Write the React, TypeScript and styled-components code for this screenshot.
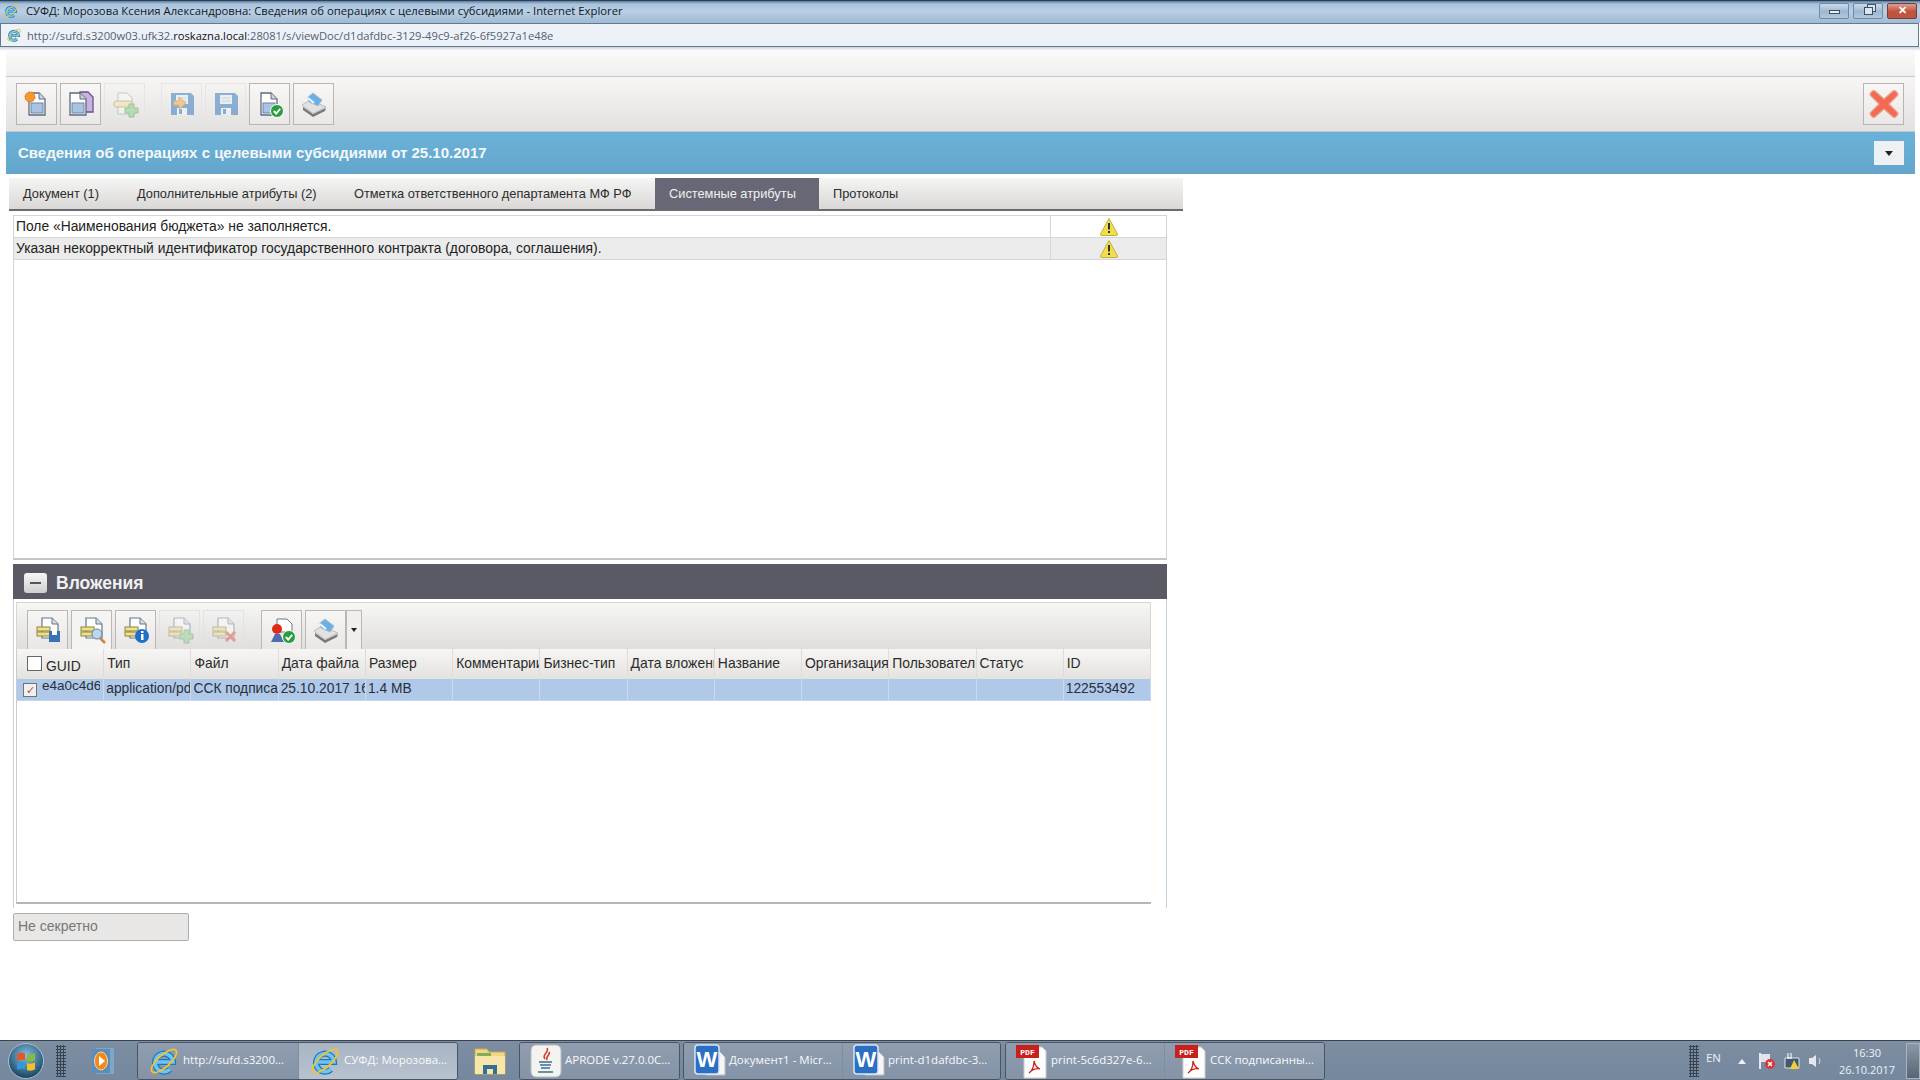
import React, { FC, ReactNode } from 'react';
import styled, { createGlobalStyle } from 'styled-components';

const GlobalStyle = createGlobalStyle`
	html, body {
		margin: 0;
		padding: 0;
		background: #fff;
	}
	* {
		box-sizing: border-box;
	}
`;

const tabs = [
	{ label: 'Документ (1)', width: 114 },
	{ label: 'Дополнительные атрибуты (2)', width: 217 },
	{ label: 'Отметка ответственного департамента МФ РФ', width: 301 },
	{ label: 'Системные атрибуты', width: 164, active: true },
	{ label: 'Протоколы', width: 120 },
];

const columns = ['Тип', 'Файл', 'Дата файла', 'Размер', 'Комментарии', 'Бизнес-тип', 'Дата вложения', 'Название', 'Организация', 'Пользователь', 'Статус', 'ID'];
const rowCells = ['application/pdf', 'ССК подписанный', '25.10.2017 16:30', '1.4 MB', '', '', '', '', '', '', '', '122553492'];

/* ---------- icons ---------- */

const Svg: FC<{ size?: number; children: ReactNode }> = ({ size = 28, children }) => (
	<svg width={size} height={size} viewBox="0 0 28 28" fill="none">
		{children}
	</svg>
);

const OkBadge = () => (
	<>
		<circle cx="21" cy="21" r="6.5" fill="#2a9d3c" stroke="#fff" strokeWidth="1" />
		<path d="M17.8 21l2.4 2.5 4-4.6" stroke="#fff" strokeWidth="1.9" />
	</>
);

const PlusBadge = () => <path d="M18 14h5v4h4v5h-4v4h-5v-4h-4v-5h4z" fill="#8fd08a" stroke="#5da55a" />;

const Page2 = ({ x = 5 }: { x?: number }) => (
	<>
		<path d={`M${x} 3h10l6 6v16H${x}z`} fill="#fff" stroke="#5d6b7c" strokeWidth="1.3" />
		<path d={`M${x + 10} 3v6h6`} fill="#cdd6e0" stroke="#5d6b7c" />
		<rect x={x + 2} y="13" width="12" height="10" fill="#a9c3e4" stroke="#6c84a2" />
	</>
);

const NewDocIcon = () => (
	<Svg>
		<Page2 x={6} />
		<circle cx="7" cy="7" r="5" fill="#f29a2e" stroke="#e26d1f" strokeDasharray="2 1" />
	</Svg>
);

const CopyDocIcon = () => (
	<Svg>
		<path d="M13 2h8l5 5v15H13z" fill="#c7b4de" stroke="#6a4f93" strokeWidth="1.3" />
		<Page2 x={3} />
	</Svg>
);

const AddDocIcon = () => (
	<Svg>
		<g opacity="0.55">
			<path d="M7 3h9l5 5v16H7z" fill="#fafafa" stroke="#9aa" />
			<rect x="3" y="11" width="18" height="6" rx="2" fill="#f2e3a8" stroke="#b5a45c" />
			<PlusBadge />
		</g>
	</Svg>
);

const FloppyIcon: FC<{ arrow?: boolean }> = ({ arrow }) => (
	<Svg>
		<g opacity="0.62">
			<path d="M3 3h20l3 3v19H3z" fill="#4f8ac4" />
			<rect x="8" y="5" width="12" height="9" fill="#e8eef5" />
			<path d="M10 8h8M10 11h8" stroke="#b7c9dc" />
			<rect x="9" y="18" width="10" height="7" fill="#f0f4f8" />
			<rect x="11" y="19" width="3" height="5" fill="#4f8ac4" />
			{arrow && <path d="M6 11h5V7l7 6-7 6v-4H6z" fill="#f2b35a" stroke="#d58f36" />}
		</g>
	</Svg>
);

const CheckDocIcon = () => (
	<Svg>
		<Page2 x={5} />
		<OkBadge />
	</Svg>
);

const PrinterIcon = () => (
	<Svg>
		<path d="M3 17l10 7 13-6-1 3-12 6-10-7z" fill="#77787a" />
		<path d="M2 15l8-5 16 7-13 6.500z" fill="#e2e2e2" stroke="#bcbcbc" />
		<path d="M8 7l5-4 9 7-4 6-9-4z" fill="#6ab0e6" stroke="#a9bccb" />
		<path d="M8 8l6 5" stroke="#f3f6f9" strokeWidth="2" />
	</Svg>
);

const CloseBigIcon = () => (
	<svg width="30" height="30" viewBox="0 0 30 30">
		<path
			d="M6 2l9 8 9-8q2-1 3 .5l1.500 1.500q1 2-.5 3l-8 8 8 8q1.500 1 .5 3l-1.500 1.500q-1 1.500-3 .5l-9-8-9 8q-2 1-3-.5l-1.500-1.500q-1-2 .5-3l8-8-8-8q-1.500-1-.5-3l1.500-1.500q1-1.500 3-.5z"
			fill="#f26a50"
			stroke="#e9a294"
			strokeWidth="1.2"
		/>
	</svg>
);

const WarningIcon = () => (
	<svg width="20" height="20" viewBox="0 0 20 20">
		<path d="M10 1.5l8.5 15.5q.3 1.5-1.2 1.5H2.7q-1.5 0-1.2-1.5z" fill="#f1dd4d" stroke="#c3b13b" />
		<rect x="9" y="6" width="2" height="6.5" fill="#333" />
		<rect x="9" y="14" width="2" height="2" fill="#333" />
	</svg>
);

const SlipDoc: FC<{ faded?: boolean; children?: ReactNode }> = ({ faded, children }) => (
	<Svg>
		<g opacity={faded ? 0.45 : 1}>
			<path d="M8 2h10l6 6v14H8z" fill="#fff" stroke="#66778a" strokeWidth="1.2" />
			<path d="M18 2v6h6" fill="#d5dde6" stroke="#66778a" />
			<rect x="3" y="11" width="13" height="4" fill="#efe08a" stroke="#8c8644" />
			<rect x="3" y="16" width="13" height="4" fill="#efe08a" stroke="#8c8644" />
			{children}
		</g>
	</Svg>
);

const SignIcon = () => (
	<Svg>
		<path d="M9 3h10l5 5v8H9z" fill="#fff" stroke="#66778a" />
		<circle cx="9" cy="13" r="5" fill="#dd2a1b" />
		<path d="M3 26l4-8h5l4 8z" fill="#4c6db0" />
		<OkBadge />
	</Svg>
);

const IeIcon: FC<{ size?: number }> = ({ size = 16 }) => (
	<svg width={size} height={size} viewBox="0 0 32 32" fill="none">
		<path d="M8 17h17a9 9 0 1 0-3 7.4" stroke="#1f74bd" strokeWidth="6" />
		<path d="M8 17h17a9 9 0 1 0-3 7.4" stroke="#6cc4f2" strokeWidth="3.6" />
		<ellipse cx="16" cy="16" rx="16" ry="6" transform="rotate(-42 16 16)" stroke="#efc52f" strokeWidth="1.8" />
	</svg>
);

const StartOrb = () => (
	<svg width="36" height="36" viewBox="0 0 36 36">
		<defs>
			<radialGradient id="orbFill" cx="50%" cy="35%" r="65%">
				<stop offset="0%" stopColor="#8cc0dc" />
				<stop offset="70%" stopColor="#33688a" />
				<stop offset="100%" stopColor="#1d3f58" />
			</radialGradient>
		</defs>
		<circle cx="18" cy="18" r="17.500" fill="url(#orbFill)" stroke="#a7c3d5" />
		<path d="M9 11q3.500-2 8-.5v7q-4.500-1.500-8 .5z" fill="#e4572e" />
		<path d="M19 11q3.500 1.500 8-.5v7q-4.500 2-8 .5z" fill="#86bc3f" />
		<path d="M9 20q3.500-2 8-.5v7q-4.500-1.500-8 .5z" fill="#2f9ad6" />
		<path d="M19 20q3.500 1.500 8-.5v7q-4.500 2-8 .5z" fill="#f3c029" />
	</svg>
);

const MediaIcon = () => (
	<svg width="24" height="32" viewBox="0 0 24 32">
		<rect x="5" y="3" width="18" height="26" fill="#7fa6c8" />
		<rect x="1" y="4" width="18" height="24" fill="#5c8db8" />
		<ellipse cx="10" cy="16" rx="6.500" ry="9" fill="#f08a1d" stroke="#f8d6a8" />
		<path d="M8 11l6 5-6 5z" fill="#fff" />
	</svg>
);

const FolderIcon = () => (
	<svg width="34" height="34" viewBox="0 0 34 34">
		<path d="M2 5h12l2 3h16v22H2z" fill="#f2d684" stroke="#c9a94f" />
		<rect x="4" y="9" width="14" height="4" fill="#7fae5d" />
		<rect x="2" y="12" width="30" height="18" fill="#f7e6a9" />
		<path d="M10 30v-9h14v9h-4v-5h-6v5z" fill="#356f98" />
	</svg>
);

const JavaIcon = () => (
	<svg width="32" height="34" viewBox="0 0 32 34">
		<rect x="1" y="1" width="30" height="32" rx="5" fill="#f3f3f0" stroke="#b8bcc2" />
		<path d="M17 4c3 4-6 7-2 11M19 8c2 3-4 4-2 8" stroke="#d1432c" strokeWidth="1.6" fill="none" />
		<path d="M9 18h13M10 21h11M11 24h9M8 28h15" stroke="#3f6d92" strokeWidth="1.6" />
	</svg>
);

const WordIcon = () => (
	<svg width="32" height="34" viewBox="0 0 32 34">
		<path d="M12 8h14l5 5v18H12z" fill="#f6f6f6" stroke="#bbb" />
		<rect x="1" y="1" width="24" height="29" rx="3" fill="#2a6fc4" stroke="#d7e6f5" strokeWidth="1.5" />
		<text x="13" y="23" fontSize="22" fontWeight="700" textAnchor="middle" fontFamily="Liberation Sans, sans-serif" fill="#fff">
			W
		</text>
	</svg>
);

const PdfIcon = () => (
	<svg width="32" height="36" viewBox="0 0 32 36">
		<path d="M8 4h18l4 4v27H8z" fill="#fdfdfd" stroke="#ccc" />
		<rect x="0" y="2" width="23" height="13" fill="#c8201b" />
		<text x="11.500" y="12" fontSize="8" fontFamily="Liberation Mono, monospace" fontWeight="700" textAnchor="middle" fill="#fff">
			PDF
		</text>
		<path d="M13 30c3-2 5-7 5-12 1 4 3 7 6 8-3-1-7 0-11 4z" stroke="#c8201b" strokeWidth="1.3" fill="none" />
	</svg>
);

const TrayFlag = () => (
	<svg width="18" height="18" viewBox="0 0 18 18">
		<rect x="1" y="1" width="2" height="16" fill="#e6e9ed" />
		<path d="M3 2h9v8H3z" fill="#dfe4ea" />
		<circle cx="12" cy="12" r="5" fill="#d9343c" />
		<path d="M10 10l4 4M14 10l-4 4" stroke="#fff" strokeWidth="1.4" />
	</svg>
);

const TrayNet = () => (
	<svg width="18" height="18" viewBox="0 0 18 18">
		<path d="M2 6h14v10H2z" fill="#43586f" stroke="#dfe4ea" />
		<path d="M5 1v5M8 1v5M4 6h5" stroke="#e8ecef" strokeWidth="1.3" />
		<path d="M11 8l5 9H7z" fill="#f0cf3d" />
	</svg>
);

const TraySound = () => (
	<svg width="16" height="16" viewBox="0 0 16 16" fill="none">
		<path d="M1 5h3l4-3v12l-4-3H1z" fill="#e5e9ee" />
		<path d="M11 5q2 3 0 6" stroke="#d5dbe2" />
	</svg>
);

/* ---------- page ---------- */

const App: FC = () => {
	return (
		<>
			<GlobalStyle />
			<Screen>
				<TitleBar>
					<IeIcon />
					<TitleText>СУФД: Морозова Ксения Александровна: Сведения об операциях с целевыми субсидиями - Internet Explorer</TitleText>
					<WindowControls>
						<WindowBtn>
							<MinGlyph />
						</WindowBtn>
						<WindowBtn>
							<MaxGlyph />
						</WindowBtn>
						<WindowBtn $close>✕</WindowBtn>
					</WindowControls>
				</TitleBar>
				<AddressBar>
					<IeIcon />
					<Url>
						http://sufd.s3200w03.ufk32.<b>roskazna.local</b>:28081/s/viewDoc/d1dafdbc-3129-49c9-af26-6f5927a1e48e
					</Url>
				</AddressBar>

				<Content>
					<MenuBand />
					<MainToolbar>
						<ToolGroup>
							<ToolButton><NewDocIcon /></ToolButton>
							<ToolButton><CopyDocIcon /></ToolButton>
							<ToolButton $disabled><AddDocIcon /></ToolButton>
						</ToolGroup>
						<ToolGroup>
							<ToolButton $disabled><FloppyIcon arrow /></ToolButton>
							<ToolButton $disabled><FloppyIcon /></ToolButton>
							<ToolButton><CheckDocIcon /></ToolButton>
							<ToolButton><PrinterIcon /></ToolButton>
						</ToolGroup>
						<CloseButton><CloseBigIcon /></CloseButton>
					</MainToolbar>
					<DocHeader>
						<DocTitle>Сведения об операциях с целевыми субсидиями от 25.10.2017</DocTitle>
						<CollapseMenu />
					</DocHeader>

					<TabBar>
						{tabs.map((tab) => (
							<Tab key={tab.label} $active={tab.active} $width={tab.width}>
								{tab.label}
							</Tab>
						))}
					</TabBar>

					<MessagesPanel>
						<MessageRow>
							<MessageText>Поле «Наименования бюджета» не заполняется.</MessageText>
							<MessageFlag><WarningIcon /></MessageFlag>
						</MessageRow>
						<MessageRow $alt>
							<MessageText>Указан некорректный идентификатор государственного контракта (договора, соглашения).</MessageText>
							<MessageFlag><WarningIcon /></MessageFlag>
						</MessageRow>
					</MessagesPanel>

					<AttachmentsHeader>
						<MinusButton />
						<AttachmentsTitle>Вложения</AttachmentsTitle>
					</AttachmentsHeader>
					<AttachmentsBody>
						<GridToolbar>
							<SmallButton><SlipDoc><path d="M15 15h11v11H15z" fill="#3a72b5" /><rect x="18" y="15" width="5" height="4" fill="#fff" /></SlipDoc></SmallButton>
							<SmallButton $pressed><SlipDoc><circle cx="19" cy="18" r="5" fill="#bcd8ef" stroke="#5b87b0" /><path d="M22 22l5 5" stroke="#d2853a" strokeWidth="2.500" /></SlipDoc></SmallButton>
							<SmallButton><SlipDoc><circle cx="20" cy="20" r="7" fill="#1f6fcb" /><rect x="19" y="18" width="2.500" height="6" fill="#fff" /><rect x="19" y="15" width="2.500" height="2" fill="#fff" /></SlipDoc></SmallButton>
							<SmallButton $disabled><SlipDoc faded><PlusBadge /></SlipDoc></SmallButton>
							<SmallButton $disabled $gapAfter><SlipDoc faded><path d="M16 16l9 9M25 16l-9 9" stroke="#d64a3c" strokeWidth="3" /></SlipDoc></SmallButton>
							<SmallButton><SignIcon /></SmallButton>
							<SmallButton><PrinterIcon /></SmallButton>
							<SplitArrow />
						</GridToolbar>
						<GridFrame>
							<GridHeader>
								<HeaderCell>
									<HeaderBox />
									<GuidLabel>GUID</GuidLabel>
								</HeaderCell>
								{columns.map((column) => (
									<HeaderCell key={column}>{column}</HeaderCell>
								))}
							</GridHeader>
							<GridRow>
								<RowCell>
									<RowCheck>✓</RowCheck>
									<GuidValue>e4a0c4d6-7f</GuidValue>
								</RowCell>
								{rowCells.map((value, index) => (
									<RowCell key={index}>{value}</RowCell>
								))}
							</GridRow>
						</GridFrame>
					</AttachmentsBody>
					<SecrecyField>Не секретно</SecrecyField>
				</Content>

				<Taskbar>
					<StartSlot><StartOrb /></StartSlot>
					<Grip />
					<QuickLaunch><MediaIcon /></QuickLaunch>
					<TaskGroup>
						<TaskItem $width={160}><IeIcon size={32} /><TaskLabel>http://sufd.s3200...</TaskLabel></TaskItem>
						<TaskItem $width={159} $active><IeIcon size={32} /><TaskLabel>СУФД: Морозова...</TaskLabel></TaskItem>
					</TaskGroup>
					<PinnedSlot><FolderIcon /></PinnedSlot>
					<TaskGroup>
						<TaskItem $width={159}><JavaIcon /><TaskLabel>APRODE v.27.0.0C...</TaskLabel></TaskItem>
					</TaskGroup>
					<TaskGroup $tight>
						<TaskItem $width={158}><WordIcon /><TaskLabel>Документ1 - Micr...</TaskLabel></TaskItem>
						<TaskItem $width={158}><WordIcon /><TaskLabel>print-d1dafdbc-3...</TaskLabel></TaskItem>
					</TaskGroup>
					<TaskGroup $tight>
						<TaskItem $width={158}><PdfIcon /><TaskLabel>print-5c6d327e-6...</TaskLabel></TaskItem>
						<TaskItem $width={160}><PdfIcon /><TaskLabel>ССК подписанны...</TaskLabel></TaskItem>
					</TaskGroup>
					<Tray>
						<Grip />
						<Lang>EN</Lang>
						<TrayArrow />
						<TrayFlag />
						<TrayNet />
						<TraySound />
						<Clock>
							<span>16:30</span>
							<span>26.10.2017</span>
						</Clock>
						<ShowDesktop />
					</Tray>
				</Taskbar>
			</Screen>
		</>
	);
};

export default App;

const Screen = styled.div`
	width: 1920px;
	height: 1080px;
	display: flex;
	flex-direction: column;
	overflow: hidden;
	background: #fff;
	font-family: 'Liberation Sans', Arial, sans-serif;
	color: #222;
`;

const TitleBar = styled.div`
	height: 23px;
	flex: none;
	display: flex;
	align-items: center;
	padding: 0 3px 3px 3px;
	background: linear-gradient(#5b7da0 0, #a9c3dd 3px, #b9cfe4 10px, #9fbad6 100%);
	border-top: 1px solid #2f3f52;
`;

const TitleText = styled.span`
	margin-left: 7px;
	font-family: 'Open Sans', sans-serif;
	font-size: 11.3px;
	color: #10171f;
	white-space: nowrap;
`;

const WindowControls = styled.div`
	margin-left: auto;
	display: flex;
	gap: 4px;
`;

const WindowBtn = styled.div<{ $close?: boolean }>`
	width: 30px;
	height: 16px;
	border: 1px solid ${(p) => (p.$close ? '#7d3a30' : '#6f8aa5')};
	border-radius: 2px;
	background: ${(p) => (p.$close ? 'linear-gradient(#d9a092, #c2503c 55%, #b65a48)' : 'linear-gradient(#c9dbeb, #9db7d0 55%, #b3c9dc)')};
	display: flex;
	align-items: center;
	justify-content: center;
	color: #fff;
	font-size: 11px;
	font-weight: 700;
`;

const MinGlyph = styled.i`
	width: 11px;
	height: 4px;
	margin-top: 3px;
	background: #e8eef4;
	border: 1px solid #3d4f62;
`;

const MaxGlyph = styled.i`
	width: 9px;
	height: 8px;
	background: #dbe5ee;
	border: 1px solid #3d4f62;
	box-shadow: 3px -3px 0 -1px #dbe5ee, 3px -3px 0 0 #3d4f62;
`;

const AddressBar = styled.div`
	height: 24px;
	flex: none;
	margin: 0 1px 0 0;
	display: flex;
	align-items: center;
	padding-left: 5px;
	background: #edf2f9;
	border: 1px solid #66788a;
`;

const Url = styled.span`
	margin-left: 5px;
	font-family: 'Open Sans', sans-serif;
	font-size: 11.2px;
	color: #56616e;
	white-space: nowrap;
	b {
		font-weight: 400;
		color: #111;
	}
`;

const Content = styled.main`
	flex: 1;
	min-height: 0;
	padding: 4px 5px 0 6px;
	background: linear-gradient(#c9d3de 0, #fff 4px);
`;

const MenuBand = styled.div`
	height: 26px;
	background: linear-gradient(#fafafa, #f0efef);
	border-bottom: 1px solid #c9c8c6;
`;

const MainToolbar = styled.div`
	height: 55px;
	display: flex;
	align-items: flex-start;
	padding: 6px 11px 0 10px;
	gap: 16px;
	background: linear-gradient(#f7f6f5, #e2e1df);
	border-bottom: 1px solid #c2c7ca;
`;

const ToolGroup = styled.div`
	display: flex;
	gap: 3px;
`;

const ToolButton = styled.div<{ $disabled?: boolean }>`
	width: 41px;
	height: 42px;
	display: flex;
	align-items: center;
	justify-content: center;
	border: 1px solid ${(p) => (p.$disabled ? '#e6e5e3' : '#b7b6b4')};
	background: ${(p) => (p.$disabled ? 'transparent' : 'linear-gradient(#f8f7f6, #e9e8e6)')};
`;

const CloseButton = styled(ToolButton)`
	margin-left: auto;
`;

const DocHeader = styled.div`
	height: 42px;
	display: flex;
	align-items: center;
	justify-content: space-between;
	padding: 0 11px 0 12px;
	background: linear-gradient(#6ab2d9, #64a6cb);
`;

const DocTitle = styled.h1`
	margin: -2px 0 0;
	font-size: 15px;
	font-weight: 700;
	color: #f4f8fb;
`;

const CollapseMenu = styled.div`
	width: 30px;
	height: 24px;
	background: #eef1f4;
	position: relative;
	&::after {
		content: '';
		position: absolute;
		left: 11px;
		top: 10px;
		border: 4px solid transparent;
		border-top: 5px solid #222;
		border-bottom: 0;
	}
`;

const TabBar = styled.nav`
	width: 1174px;
	height: 33px;
	margin: 4px 0 0 3px;
	display: flex;
	background: linear-gradient(#f5f5f4, #d9d8d6);
	border-bottom: 2px solid #6a6a70;
`;

const Tab = styled.div<{ $active?: boolean; $width: number }>`
	width: ${(p) => p.$width}px;
	padding-left: 14px;
	display: flex;
	align-items: center;
	font-size: 12.8px;
	white-space: nowrap;
	color: ${(p) => (p.$active ? '#f1f1f3' : '#2c2c2c')};
	background: ${(p) => (p.$active ? '#676775' : 'transparent')};
	&:nth-child(4) {
		margin-left: 14px;
	}
`;

const MessagesPanel = styled.section`
	width: 1154px;
	height: 345px;
	margin: 4px 0 0 7px;
	border: 1px solid #d2d4d6;
	border-bottom: 2px solid #c4c5c6;
	background: #fff;
`;

const MessageRow = styled.div<{ $alt?: boolean }>`
	height: 22px;
	display: flex;
	background: ${(p) => (p.$alt ? '#ebebeb' : '#fff')};
	border-bottom: 1px solid #d5d6d7;
`;

const MessageText = styled.div`
	width: 1037px;
	padding: 1px 0 0 2px;
	font-size: 13.85px;
	line-height: 19px;
	white-space: nowrap;
	border-right: 1px solid #d5d6d7;
`;

const MessageFlag = styled.div`
	flex: 1;
	display: flex;
	align-items: center;
	justify-content: center;
`;

const AttachmentsHeader = styled.div`
	width: 1154px;
	height: 35px;
	margin: 4px 0 0 7px;
	padding: 3px 0 0 11px;
	display: flex;
	align-items: center;
	gap: 9px;
	background: #595a64;
`;

const MinusButton = styled.div`
	width: 23px;
	height: 20px;
	border-radius: 3px;
	background: linear-gradient(#f7f7f7, #cfcfcf);
	position: relative;
	&::after {
		content: '';
		position: absolute;
		left: 6px;
		right: 6px;
		top: 9px;
		height: 2px;
		background: #555;
	}
`;

const AttachmentsTitle = styled.h2`
	margin: 0;
	font-size: 17.5px;
	font-weight: 700;
	color: #f1f1f3;
`;

const AttachmentsBody = styled.section`
	width: 1154px;
	height: 309px;
	margin-left: 7px;
	padding: 3px 15px 0 2px;
	border-left: 1px solid #c4d2de;
	border-right: 1px solid #c4d2de;
`;

const GridToolbar = styled.div`
	height: 47px;
	display: flex;
	align-items: flex-end;
	gap: 3px;
	padding-left: 10px;
	background: linear-gradient(#f6f6f5, #dfdedc);
	border: 1px solid #d6d6d4;
	border-bottom: none;
`;

const SmallButton = styled.div<{ $disabled?: boolean; $pressed?: boolean; $gapAfter?: boolean }>`
	width: 41px;
	height: 39px;
	display: flex;
	align-items: center;
	justify-content: center;
	margin-right: ${(p) => (p.$gapAfter ? 14 : 0)}px;
	border: 1px solid ${(p) => (p.$disabled ? '#e3e2e0' : '#b9b8b6')};
	border-bottom: none;
	background: ${(p) => (p.$pressed ? '#f4f4f3' : p.$disabled ? 'transparent' : 'linear-gradient(#f7f6f5, #e8e7e5)')};
`;

const SplitArrow = styled.div`
	width: 16px;
	height: 39px;
	margin-left: -3px;
	border: 1px solid #b9b8b6;
	border-bottom: none;
	background: #f0efee;
	position: relative;
	&::after {
		content: '';
		position: absolute;
		left: 4px;
		top: 17px;
		border: 3px solid transparent;
		border-top: 4px solid #222;
		border-bottom: 0;
	}
`;

const GridFrame = styled.div`
	height: 255px;
	border-left: 1px solid #c8ccd0;
	border-bottom: 2px solid #b5b6b7;
`;

const GridHeader = styled.div`
	height: 30px;
	display: grid;
	grid-template-columns: repeat(13, 1fr);
	background: linear-gradient(#f7f6f5, #e3e2de);
`;

const HeaderCell = styled.div`
	position: relative;
	padding: 6px 0 0 3px;
	font-size: 13.9px;
	line-height: 16px;
	white-space: nowrap;
	overflow: hidden;
	border-right: 1px solid #dddcda;
	color: #2b2b2b;
`;

const HeaderBox = styled.span`
	position: absolute;
	left: 10px;
	top: 7px;
	width: 15px;
	height: 15px;
	background: #fff;
	border: 1px solid #666;
`;

const GuidLabel = styled.span`
	position: absolute;
	left: 29px;
	top: 9px;
`;

const GridRow = styled.div`
	height: 22px;
	display: grid;
	grid-template-columns: repeat(13, 1fr);
	background: #b0c9e8;
	border-bottom: 1px solid #c6d6ea;
`;

const RowCell = styled.div`
	position: relative;
	padding: 2px 0 0 2px;
	font-size: 13.8px;
	line-height: 16px;
	white-space: nowrap;
	overflow: hidden;
	border-right: 1px solid #c9d9ee;
	color: #26303c;
`;

const RowCheck = styled.span`
	position: absolute;
	left: 6px;
	top: 4px;
	width: 14px;
	height: 14px;
	background: #f2f0ee;
	border: 1px solid #6c7480;
	color: #a35a3a;
	font-size: 11px;
	line-height: 12px;
	text-align: center;
`;

const GuidValue = styled.span`
	position: absolute;
	left: 25px;
	top: -1px;
	width: 58px;
	overflow: hidden;
	font-size: 13.5px;
`;

const SecrecyField = styled.div`
	width: 176px;
	height: 28px;
	margin: 5px 0 0 7px;
	padding: 0 0 2px 4px;
	display: flex;
	align-items: center;
	font-size: 14px;
	color: #777;
	background: #e8e7e5;
	border: 1px solid #aeaeae;
	border-radius: 2px;
`;

const Taskbar = styled.footer`
	height: 40px;
	flex: none;
	display: flex;
	align-items: stretch;
	padding-top: 1px;
	background: linear-gradient(#7d8da2, #75889e);
	border-top: 1px solid #3a4450;
`;

const StartSlot = styled.div`
	width: 56px;
	padding-left: 8px;
	display: flex;
	align-items: center;
`;

const Grip = styled.div`
	width: 10px;
	margin: 3px 0;
	background-image: radial-gradient(#36424f 1px, transparent 1.2px);
	background-size: 3px 3px;
`;

const QuickLaunch = styled.div`
	width: 71px;
	padding-left: 25px;
	display: flex;
	align-items: center;
`;

const TaskGroup = styled.div<{ $tight?: boolean }>`
	display: flex;
	margin-right: ${(p) => (p.$tight ? 4 : 3)}px;
	border: 1px solid #4a5563;
	border-radius: 3px;
	box-shadow: inset 0 0 0 1px rgba(255, 255, 255, 0.25);
	overflow: hidden;
`;

const TaskItem = styled.div<{ $width: number; $active?: boolean }>`
	width: ${(p) => p.$width}px;
	display: flex;
	align-items: center;
	gap: 3px;
	padding-left: 10px;
	background: ${(p) => (p.$active ? 'linear-gradient(#a9b5c4, #b8c2cf)' : 'linear-gradient(#909db0, #8493a7)')};
	& + & {
		border-left: 1px solid #7f8da1;
	}
`;

const TaskLabel = styled.span`
	margin-top: -3px;
	font-family: 'Open Sans', sans-serif;
	font-size: 11.5px;
	color: #f7f9fb;
	white-space: nowrap;
`;

const PinnedSlot = styled.div`
	width: 58px;
	display: flex;
	align-items: center;
	justify-content: center;
`;

const Tray = styled.div`
	flex: 1;
	display: flex;
	align-items: center;
	justify-content: flex-end;
	gap: 7px;
	color: #eef2f6;
	font-family: 'Open Sans', sans-serif;
	${Grip} {
		height: 32px;
	}
`;

const Lang = styled.span`
	font-size: 11.5px;
	margin: -8px 10px 0 0;
`;

const TrayArrow = styled.i`
	border: 4px solid transparent;
	border-bottom: 5px solid #eef2f6;
	border-top: 0;
	margin-right: 5px;
`;

const Clock = styled.div`
	width: 64px;
	margin-left: 4px;
	display: flex;
	flex-direction: column;
	align-items: center;
	font-size: 11px;
	line-height: 17px;
`;

const ShowDesktop = styled.div`
	width: 14px;
	height: 36px;
	background: linear-gradient(#8b98a8, #566474);
	border: 1px solid #aab4c0;
`;
